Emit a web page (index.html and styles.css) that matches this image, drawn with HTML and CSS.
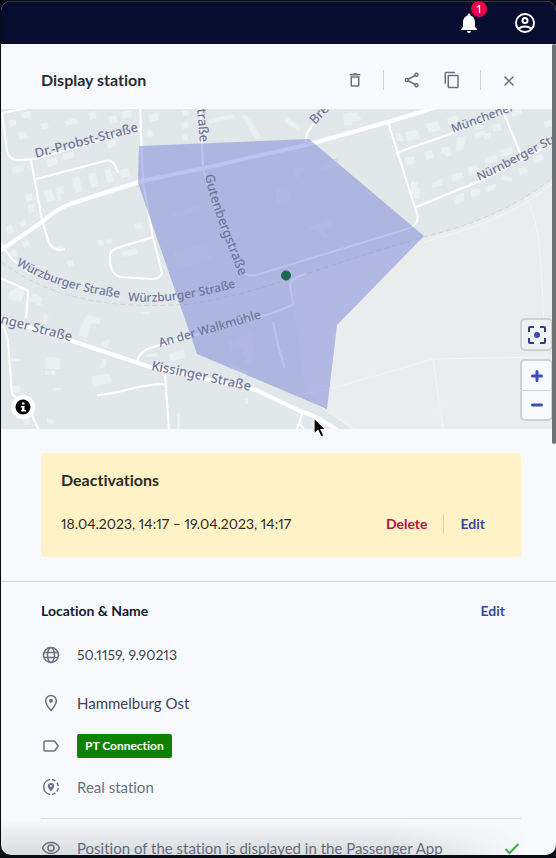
FILE: index.html
```html
<!DOCTYPE html>
<html lang="en">
<head>
<meta charset="utf-8">
<meta name="viewport" content="width=device-width, initial-scale=1">
<title>Display station</title>
<link rel="stylesheet" href="styles.css">
</head>
<body>
<div class="app">
  <header class="topbar">
    <button class="topbar-button" aria-label="Notifications">
      <svg width="24" height="24" viewBox="0 0 24 24" fill="currentColor"><path d="M12 22c1.100 0 2-.9 2-2h-4c0 1.100.9 2 2 2zm6-6v-5c0-3.070-1.640-5.640-4.500-6.320V4a1.500 1.500 0 0 0-3 0v.68C7.630 5.360 6 7.920 6 11v5l-2 2v1h16v-1l-2-2z"/></svg>
      <span class="count">1</span>
    </button>
    <button class="topbar-button" aria-label="Account">
      <svg width="24" height="24" viewBox="0 0 24 24" fill="none" stroke="currentColor" stroke-width="2"><circle cx="12" cy="12" r="9"/><circle cx="12" cy="9.500" r="2.500"/><path d="M5.500 17.800c3.500-3 9.500-3 13 0"/></svg>
    </button>
  </header>

  <main class="panel">
    <div class="titlebar">
      <h1>Display station</h1>
      <div class="tools">
        <button class="tool" aria-label="Delete station"><svg width="18" height="18" viewBox="0 0 24 24" fill="currentColor"><path d="M6 19c0 1.100.9 2 2 2h8c1.100 0 2-.9 2-2V7H6v12zM8 9h8v10H8V9zm7.500-5-1-1h-5l-1 1H5v2h14V4z"/></svg></button>
        <span class="rule"></span>
        <button class="tool" aria-label="Share"><svg width="18" height="18" viewBox="0 0 24 24" fill="none" stroke="currentColor" stroke-width="2"><circle cx="18" cy="5" r="2"/><circle cx="5" cy="12" r="2"/><circle cx="18" cy="19" r="2"/><path d="m7 11 9-5M7 13l9 5"/></svg></button>
        <button class="tool" aria-label="Copy"><svg width="18" height="18" viewBox="0 0 24 24" fill="currentColor"><path d="M16 1H4c-1.100 0-2 .9-2 2v14h2V3h12V1zm3 4H8c-1.100 0-2 .9-2 2v14c0 1.100.9 2 2 2h11c1.100 0 2-.9 2-2V7c0-1.100-.9-2-2-2zm0 16H8V7h11v14z"/></svg></button>
        <span class="rule"></span>
        <button class="tool close" aria-label="Close"><svg width="18" height="18" viewBox="0 0 18 18" fill="none" stroke="currentColor" stroke-width="1.500"><path d="m4.500 5.500 9 9m0-9-9 9"/></svg></button>
      </div>
    </div>

    <div class="map">
      <svg class="map-canvas" viewBox="1 109 555 320" preserveAspectRatio="xMidYMid slice" role="img" aria-label="Map of the station area">
        <defs>
          <path id="probst" d="M36 158 170 123"/>
          <path id="trasse" d="M197 109 203 175"/>
          <path id="gutenberg" d="M205 175C210 204 225 238 243 286"/>
          <path id="wuerz-west" d="M16 265C45 282 80 295 150 301"/>
          <path id="wuerz-east" d="M128 301C165 304 205 298 270 277"/>
          <path id="walk" d="M160 347 290 310"/>
          <path id="kiss" d="M151 370C185 376 220 384 290 400"/>
          <path id="kiss-west" d="M-40 314 0 323 100 349"/>
          <path id="nuern" d="M479 181C505 170 525 156 600 120"/>
          <path id="muen" d="M453 133 550 97"/>
          <path id="bre" d="M315 125 345 93"/>
        </defs>
        <path fill="#e2e8ea" d="M0 100h560v340H0z"/>
        <path fill="#ebecee" d="M560 172C520 205 482 222 424 238L290 278 306 392 355 432H560z"/>
        <g fill="#ebf0f2">
          <path d="m8 121 7-2 2 6-7 2zM21 113l9-2 1 6-9 2zM18 133l8-2 2 7-8 2zM40 124l7-2 2 6-7 2zM64 121l12-3 2 5-12 3zM88 113l7-2 2 7-7 2zM108 117l8-2 2 7-8 2zM122 112l9-2 1 7-9 2zM12 167l11-2 1 6-11 2zM147 131l5-1 1 6-5 1zM148 115l9-2 2 7-9 2zM181 123l7-2 1 6-7 2zM182 111l6-1 1 5-6 1zM182 135l5-1 1 6-5 1z"/>
          <path d="m72 179 7-2 4 14-7 2zM88 174l7-2 4 14-7 2zM104 171l6-2 4 12-6 2zM120 170l9-2 1 8-9 2zM46 160l10-3 2 7-10 3zM62 154l11-3 2 6-11 3zM106 142l9-3 2 7-9 3zM43 191l8-2 5 11-9 2zM25 195l7-2 2 7-7 2zM28 205l6-1 1 8-6 1zM56 188l7-2 1 7-7 2zM57 196l4-1 1 5-4 1z"/>
          <path d="m5 227 6-3 3 8-6 2zM19 223l5-4 3 5-5 4zM22 242l6-3 2 6-6 3zM10 252l5-3 3 6-6 3zM134 224l7-1 1 5-7 1zM122 252l14-4 2 6-14 3zM67 261l6-1 1 6-6 1zM55 247l8-2 1 5-8 2zM97 241l5-2 2 6-5 2zM106 240l5-1 1 4-5 1z"/>
          <path d="m208 119 26-5 1 4-26 6zM242 116l5-1 14 22-5 3zM349 111l12 6-1 4-13-6zM286 117l14 9-1 5-15-9zM343 113h14v8h-5v4h-8zM396 133h5l2 8h-6zM405 132l13-2 2 9-13 2zM426 124l12-3 3 9-12 3zM447 118l11-3 2 7-11 3zM473 125l9-3 2 6-9 3zM444 149l6-1 2 7-6 2zM424 152l8-2 2 8-8 2zM405 158l9-2 2 7-9 2zM441 148l9-2v6l-9 2zM457 138l10-2-4 14-7 2zM458 140l6-2 2 6-6 2zM474 133l11-3-3 7-7 3zM483 133h8v5l-7 1zM491 125l9-2 2 7-8 2z"/>
          <path d="m411 181 7 2-1 5 4 1-2 10-8-1zM431 184l11-6 1 7-10 3zM451 175l11-3 2 6-11 4zM467 168l10-3 3 8-10 3zM485 158l12-3v6l-11 2zM499 150l13-3 1 7-12 3zM456 195l8-2v8l-9 4zM471 190l9-2v7l-9 2zM485 187l11-3-1 6-9 2zM502 175l11 3-2 4-10-3zM518 169l7-3 3 6-8 3zM532 158l10-4 2 5-9 5zM544 122l7-3 2 6-8 3zM510 110l10-4 2 7-9 4z"/>
          <path d="m9 292 11-6 5 4-4 12-13-3zM33 293l10 5-2 8-11-4zM45 314l4 2-2 8-5-2zM81 327l5-12 15 3-2 6-8-1-4 15-9-3zM103 342l7-3-3 9-6-2zM141 312h8v2h-8zM46 357l14 1v11H45zM45 371h4v4h-4zM51 371h4v4h-4zM53 388h8v2h-8zM10 359h10v2H10zM13 386l7-1v7l-7 1zM47 418l7 2-2 4-5-1zM23 418l6-2 2 7-7 2zM92 376l18-2 2 9-19 4zM102 360l4-1v8l-6 1zM147 355l10-2v4h-10zM169 354l15-5 1 9-14 3zM177 413h3v16h-3zM245 398h3v6h-3zM228 362l20 10-2 4-15-7z"/>
        </g>
        <g class="railway"><path d="M-5 257C45 298 108 310 190 304 260 294 350 257 424 237 482 222 520 205 560 172"/></g>
        <g class="footpaths"><path d="M424 242C485 225 522 211 560 177M525 197C543 225 540 270 546 357L433 359 330 389 302 394M433 359 443 429M305 396 358 432"/></g>
        <g class="streets">
          <path d="M-2 114 32 107M2 114 7 151Q9 160 18 160L34 159 141 129M140 105 143 182 153 237 162 273Q160 279 153 279L120 277Q111 274 110 262V255Q110 251 117 248L153 237M31 160 42 220 49 243Q54 252 65 249M36 179 105 161Q114 158 118 173"/>
          <path d="M-2 240 12 259 30 274M-2 277 25 289Q29 290 28 295L26 318M3 325 8 340 12 394 30 411 39 431M137 362Q140 350 153 347L270 314 293 305 290 284Q292 277 306 274M97 395C123 394 135 384 165 384M165 374 169 430M273 322 279 349 285 368"/>
          <path d="M200 105 203 168M203 168 211 198 243 271Q246 277 256 275L407 229Q420 225 417 214L388 122M306 145Q304 135 312 126L327 109M396 153 450 134 540 97M416 207 480 181 556 142M502 109 521 155M303 412 296 431M299 422 305 431"/>
        </g>
        <path class="main-road" d="M-2 252 42 222Q55 210 70 204L142 181 200 169 310 144 388 122 450 103M-2 317 72 341 150 367 256 390 300 411Q320 417 341 433"/>
        <path fill="#6777d6" fill-opacity=".44" d="m139 146 170-7 115 97-87 89-10 84-130-55-59-171z"/>
        <g fill="#bbbde7" fill-opacity=".3"><path d="m174 212 25-8 3 8-28 6zM174 252l32-9 5 17-34 9zM311 226l19-8 3 7-8 4 4 10-8-3-5-6-8 1zM293 170l9-4 2 6-8 7zM320 166l17-8 2 7-17 6zM276 190l11-4 4 15-15 5zM230 341l21-8 5 26-9 6-6-16-11 2z"/></g>
        <g class="street-names">
          <text><textPath href="#probst">Dr.-Probst-Straße</textPath></text>
          <text><textPath href="#trasse">traße</textPath></text>
          <text><textPath href="#gutenberg">Gutenbergstraße</textPath></text>
          <text class="narrow"><textPath href="#wuerz-west">Würzburger Straße</textPath></text>
          <text class="narrow"><textPath href="#wuerz-east">Würzburger Straße</textPath></text>
          <text class="narrow"><textPath href="#walk">An der Walkmühle</textPath></text>
          <text><textPath href="#kiss">Kissinger Straße</textPath></text>
          <text><textPath href="#kiss-west" startOffset="41">nger Straße</textPath></text>
          <text class="narrow"><textPath href="#nuern">Nürnberger Straße</textPath></text>
          <text class="narrow"><textPath href="#muen">Münchener</textPath></text>
          <text><textPath href="#bre">Bre</textPath></text>
        </g>
        <circle cx="286" cy="275.500" r="4.500" fill="#176b45" stroke="#315b65"/>
      </svg>
      <button class="map-info" aria-label="Map information"><svg width="16" height="16" viewBox="0 0 16 16"><circle cx="8" cy="8" r="7.500"/><path d="M6 7h3.500v4H11v1.500H6V11h1V8.500H6zM7 3.500h2.500v2H7z" fill="#fff"/></svg></button>
      <div class="map-controls">
        <div class="control-group locate"><button aria-label="Center map"><svg width="20" height="20" viewBox="0 0 20 20" fill="none" stroke="currentColor" stroke-width="2"><path d="M2 7V3q0-1 1-1h4M13 2h4q1 0 1 1v4M18 13v4q0 1-1 1h-4M7 18H3q-1 0-1-1v-4"/><circle cx="10" cy="10" r="3" fill="#3c4db5" stroke="none"/></svg></button></div>
        <div class="control-group"><button aria-label="Zoom in"><svg width="14" height="14" viewBox="0 0 14 14" stroke="currentColor" stroke-width="3" stroke-linecap="round"><path d="M7 2.500v9M2.500 7h9"/></svg></button><button aria-label="Zoom out"><svg width="14" height="14" viewBox="0 0 14 14" stroke="currentColor" stroke-width="3" stroke-linecap="round"><path d="M2.500 7h9"/></svg></button></div>
      </div>
      <svg class="pointer" width="18" height="22" viewBox="0 0 18 22" aria-hidden="true"><path d="M2 1v16l4-3.500L9 20l3-1.500-3-6h5z" stroke="#fff" stroke-width="1.200"/></svg>
    </div>

    <section class="notice">
      <h2>Deactivations</h2>
      <div class="notice-row">
        <span>18.04.2023, 14:17 – 19.04.2023, 14:17</span>
        <div class="notice-actions"><button class="link danger">Delete</button><button class="link">Edit</button></div>
      </div>
    </section>

    <section class="details">
      <div class="details-head"><h2>Location &amp; Name</h2><button class="link">Edit</button></div>
      <ul class="facts">
        <li><svg width="20" height="20" viewBox="0 0 20 20" fill="none" stroke="currentColor" stroke-width="1.500"><circle cx="10" cy="10" r="7.500"/><ellipse cx="10" cy="10" rx="3.500" ry="7.500"/><path d="M3 7.500h14M3 12.500h14"/></svg><span class="numeric">50.1159, 9.90213</span></li>
        <li><svg width="20" height="20" viewBox="0 0 20 20" fill="none" stroke="currentColor" stroke-width="1.500"><path d="M10 17.500C6.500 13.500 4.700 10.500 4.700 7.700a5.300 5.300 0 0 1 10.600 0c0 2.800-1.800 5.800-5.300 9.800z"/><circle cx="10" cy="7.800" r="2" fill="currentColor" stroke="none"/></svg><span>Hammelburg Ost</span></li>
        <li class="compact"><svg width="20" height="20" viewBox="0 0 20 20" fill="none" stroke="currentColor" stroke-width="1.500" stroke-linejoin="round"><path d="M4 5h8.500q1 0 1.600.8L17.300 10l-3.200 4.200q-.6.800-1.600.8H4q-1 0-1-1V6q0-1 1-1z"/></svg><span class="tag">PT Connection</span></li>
        <li class="muted"><svg width="20" height="20" viewBox="0 0 20 20" fill="none" stroke="currentColor" stroke-width="1.500"><path d="M9 2.600A7.500 7.500 0 0 0 9 17.400"/><path d="M11 2.600A7.500 7.500 0 0 1 11 17.400" stroke-dasharray="3.700 2"/><path d="M10 14.500c-2-2.200-3.100-3.900-3.100-5.400a3.100 3.100 0 0 1 6.200 0c0 1.500-1.100 3.200-3.100 5.400z" fill="currentColor" stroke="none"/><circle cx="10" cy="9" r="1" fill="#f8f9fc" stroke="none"/></svg><span>Real station</span></li>
        <li class="muted visibility"><svg width="20" height="20" viewBox="0 0 20 20" fill="none" stroke="currentColor" stroke-width="1.500"><path d="M1.500 10C5 2.800 15 2.800 18.500 10 15 17.200 5 17.200 1.500 10z"/><circle cx="10" cy="10" r="3"/></svg><span>Position of the station is displayed in the Passenger App</span><svg class="check" width="18" height="18" viewBox="0 0 18 18" fill="none" stroke="currentColor" stroke-width="2"><path d="m2.500 10 4 4L15.500 5"/></svg></li>
      </ul>
    </section>
    <span class="scroll-thumb"></span>
    <span class="bottom-shade"></span>
  </main>
</div>
</body>
</html>
```
FILE: styles.css
```css
* { box-sizing: border-box; }

body {
  margin: 0;
  padding: 1px 0 3px 1px;
  height: 100vh;
  overflow: hidden;
  background: #080b14;
  color: #3d4453;
  font: 15px/20px Lato, "Liberation Sans", sans-serif;
  font-variant-ligatures: none;
  font-variant-numeric: proportional-nums;
}

h1, h2 { margin: 0; font-weight: 700; }
button { padding: 0; border: 0; background: none; color: inherit; font: inherit; cursor: pointer; }
svg { display: block; flex: none; }

.app {
  height: 100%;
  display: flex;
  flex-direction: column;
  overflow: hidden;
  border-radius: 10px;
  background: #f8f9fc;
}

.topbar {
  flex: none;
  height: 43px;
  padding: 0 19px;
  display: flex;
  align-items: center;
  justify-content: flex-end;
  gap: 32px;
  background: #070d2e;
  border-top: 1px solid #33353c;
  color: #fff;
}
.topbar-button { position: relative; }
.topbar-button .count {
  position: absolute;
  top: -10px;
  right: -6px;
  width: 16px;
  height: 16px;
  border-radius: 50%;
  background: #e6004c;
  font-size: 12px;
  line-height: 16px;
}

.panel { position: relative; flex: 1; min-height: 0; overflow: hidden; }

.titlebar {
  height: 65px;
  padding: 7px 38px 0 40px;
  display: flex;
  align-items: center;
  justify-content: space-between;
}
h1 { color: #272c3a; font-size: 16px; }
.tools { display: flex; align-items: center; color: #697181; }
.tool { margin-right: 22px; }
.tool:has(+ .rule) { margin-right: 19px; }
.tool.close { margin-right: 0; }
.rule { width: 1px; height: 20px; margin-right: 19px; background: #cfd2d8; }

.map { position: relative; height: 320px; }
.map-canvas { width: 100%; height: 100%; }
.streets, .main-road, .railway, .footpaths { fill: none; stroke: #fff; stroke-width: 2; stroke-linejoin: round; }
.main-road { stroke-width: 4; }
.railway { stroke: #cdd3d6; stroke-width: 1; stroke-dasharray: 5 3; }
.footpaths { stroke: #f5f5f6; stroke-width: 1; }
.street-names { fill: #6f779a; font: 500 13px "Noto Sans", sans-serif; }
.street-names .narrow { font-size: 12px; }
.map-info {
  position: absolute;
  left: 10px;
  bottom: 10px;
  width: 24px;
  height: 24px;
  display: grid;
  place-items: center;
  border-radius: 50%;
  background: #fff;
}
.map-controls { position: absolute; right: 3px; bottom: 8px; display: grid; gap: 8px; color: #3c4db5; }
.control-group { width: 33px; border: 2px solid #d0d1d4; border-radius: 5px; background: #f8f9fc; }
.control-group button { width: 100%; height: 29px; display: grid; place-items: center; }
.control-group button + button { border-top: 1px solid #d0d1d4; }
.control-group.locate { background: #f0f1f3; color: #343e7e; }
.pointer { position: absolute; left: 311px; bottom: -10px; }

.notice { margin: 24px 35px 24px 40px; padding: 17px 16px 23px 20px; border-radius: 4px; background: #fff2c7; color: #2d2b22; }
.notice h2 { font-size: 16px; }
.notice-row { margin-top: 24px; display: flex; align-items: center; justify-content: space-between; font-size: 14px; }
.notice-actions { display: flex; }
.link { padding: 0 20px 0 16px; color: #3a489d; font-size: 14px; font-weight: 700; }
.notice-actions .link + .link { border-left: 1px solid #dfd39f; }
.link.danger { padding-right: 16px; color: #b41345; }

.details { padding: 19px 35px 0 40px; border-top: 1px solid #cdd0d5; }
.details-head { display: flex; align-items: center; justify-content: space-between; margin-bottom: 10px; }
.details-head h2 { color: #151a2b; font-size: 14px; }
.details-head .link { padding-right: 16px; }
.facts { margin: 0; padding: 0; list-style: none; }
.facts li { height: 48px; display: flex; align-items: center; gap: 16px; }
.facts .compact { height: 38px; }
.facts .muted { height: 44px; color: #697181; }
.facts svg { color: #697181; }
.facts .numeric { font-size: 14px; }
.tag { padding: 0 8px; border-radius: 2px; background: #0c8200; color: #fff; font-size: 12px; font-weight: 700; line-height: 24px; }
.facts .visibility { height: 58px; margin-top: 9px; border-top: 1px solid #dcdee2; }
.facts .check { margin-left: auto; color: #3faa4a; }

.scroll-thumb { position: absolute; top: 0; right: 0; width: 4px; height: 400px; border-radius: 3px; background: #6f7275; }
.bottom-shade {
  position: absolute;
  left: 0;
  right: 30px;
  bottom: 0;
  height: 36px;
  background: linear-gradient(#50586000, #50586030);
  mask-image: linear-gradient(90deg, #000 75%, transparent);
  pointer-events: none;
}
```
